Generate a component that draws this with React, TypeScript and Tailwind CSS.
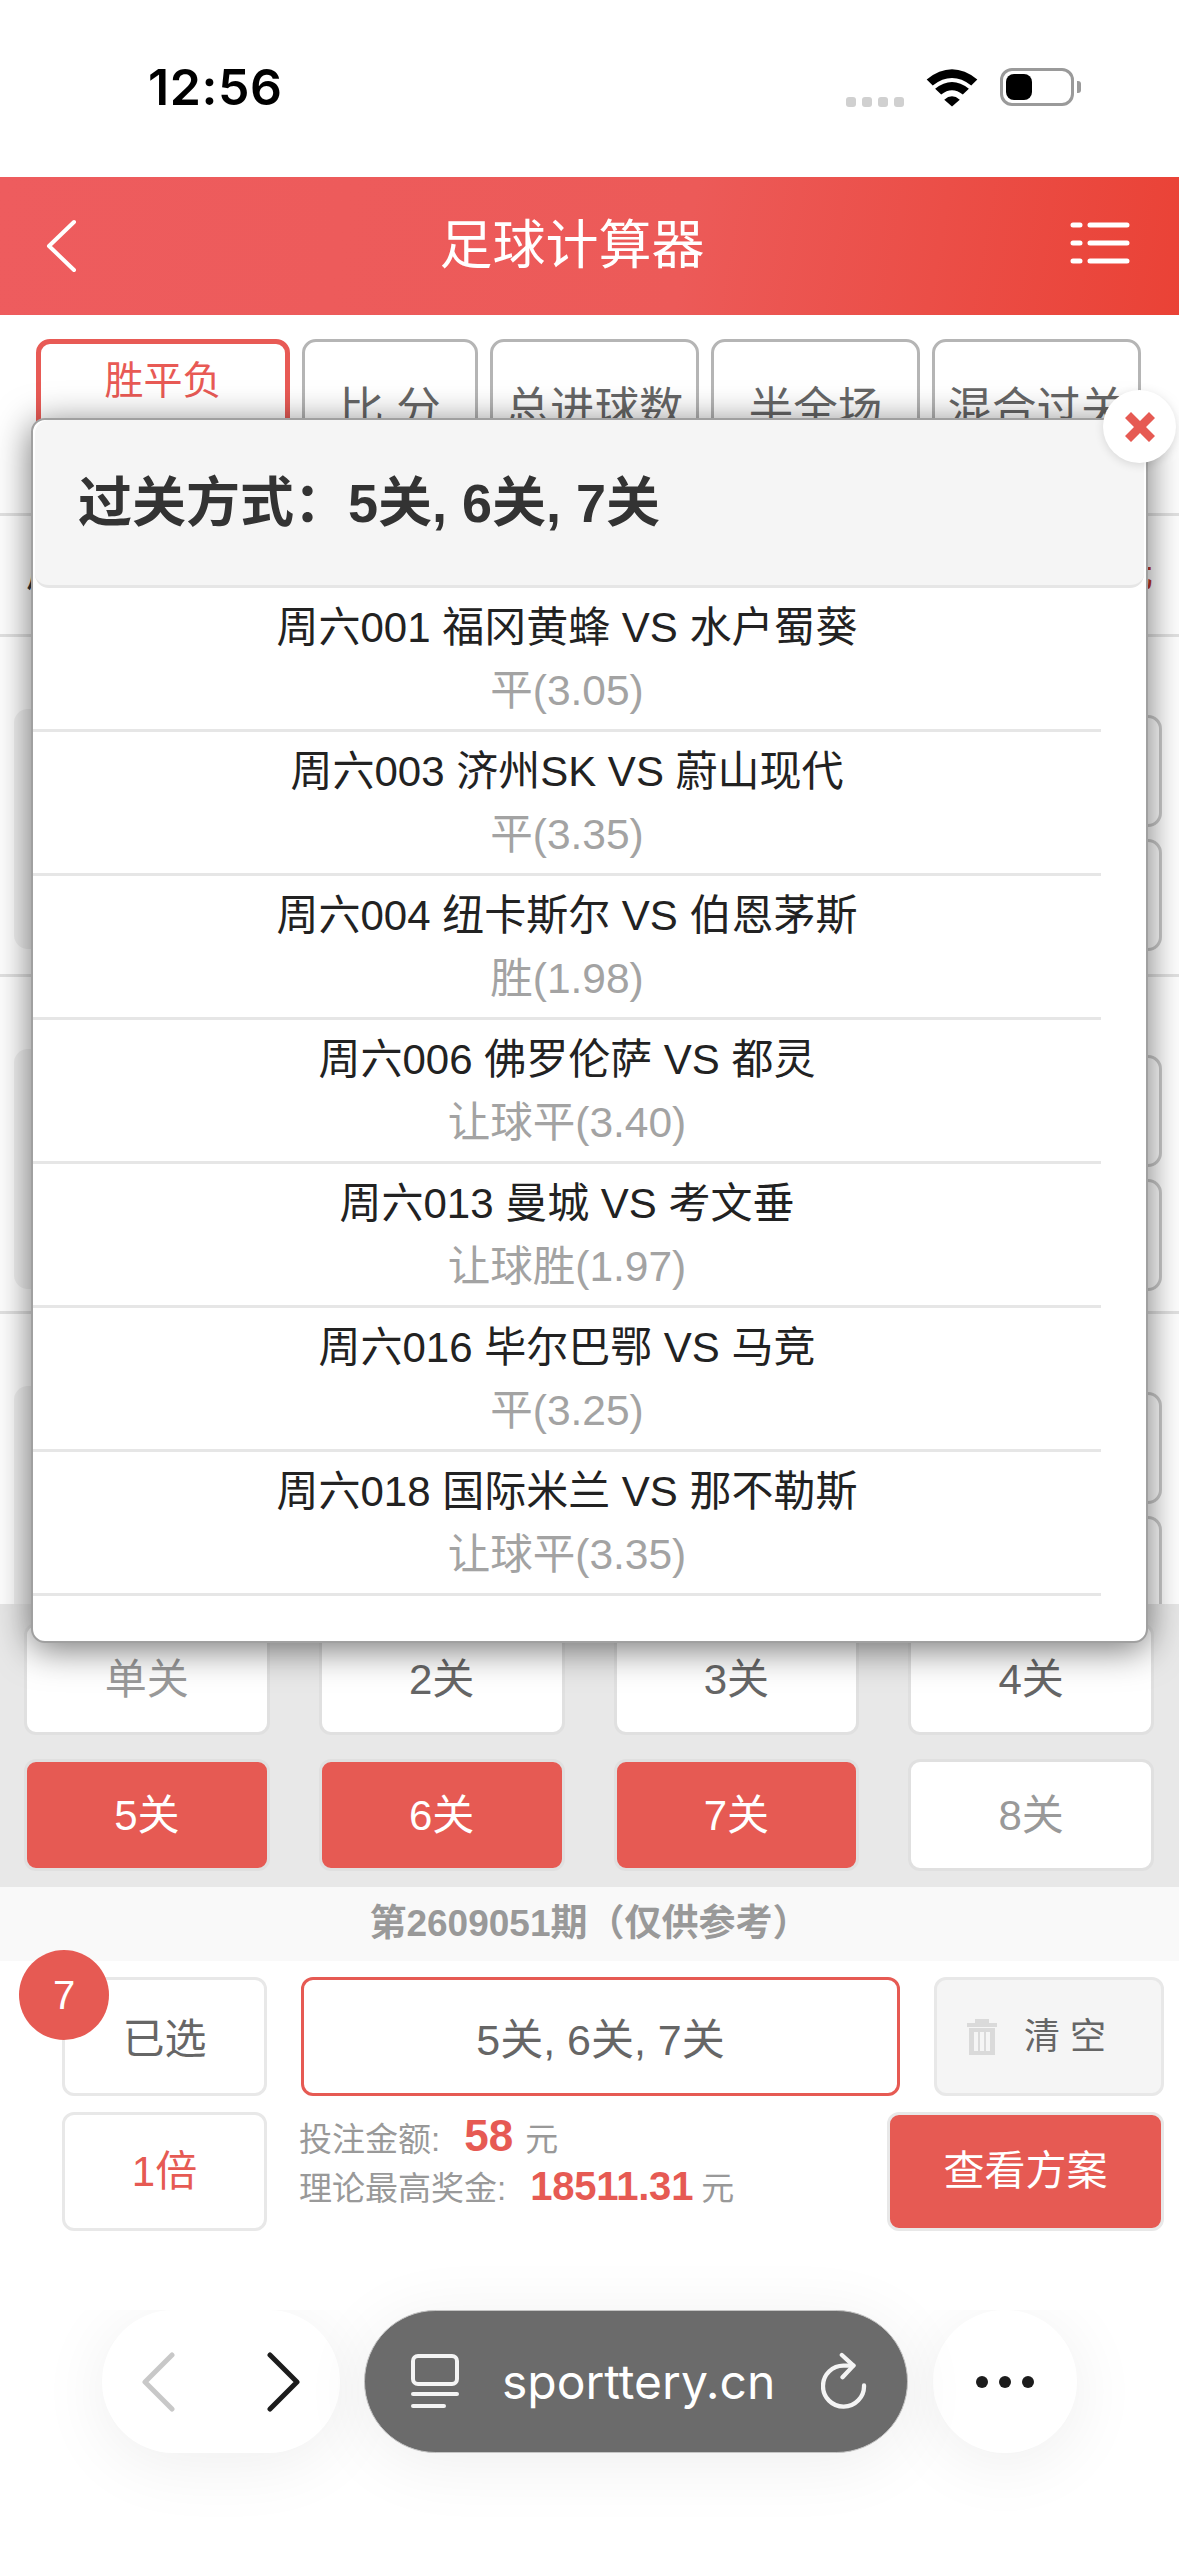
const MATCHES = [
  { title: '周六001 福冈黄蜂 VS 水户蜀葵', pick: '平(3.05)' },
  { title: '周六003 济州SK VS 蔚山现代', pick: '平(3.35)' },
  { title: '周六004 纽卡斯尔 VS 伯恩茅斯', pick: '胜(1.98)' },
  { title: '周六006 佛罗伦萨 VS 都灵', pick: '让球平(3.40)' },
  { title: '周六013 曼城 VS 考文垂', pick: '让球胜(1.97)' },
  { title: '周六016 毕尔巴鄂 VS 马竞', pick: '平(3.25)' },
  { title: '周六018 国际米兰 VS 那不勒斯', pick: '让球平(3.35)' },
];

const TABS = [
  { label: '比 分', width: 'w-[176px]' },
  { label: '总进球数', width: 'w-[209px]' },
  { label: '半全场', width: 'w-[209px]' },
  { label: '混合过关', width: 'w-[209px]' },
];

const PASSES = [
  { label: '单关', active: false, text: 'text-[#999]' },
  { label: '2关', active: false, text: 'text-[#666]' },
  { label: '3关', active: false, text: 'text-[#666]' },
  { label: '4关', active: false, text: 'text-[#666]' },
  { label: '5关', active: true, text: 'text-white' },
  { label: '6关', active: true, text: 'text-white' },
  { label: '7关', active: true, text: 'text-white' },
  { label: '8关', active: false, text: 'text-[#999]' },
];

const StatusBar = () => (
  <div className="relative h-[177px] bg-white">
    <span className="absolute left-[148px] top-[56px] font-['Inter',sans-serif] text-[50px] leading-[62px] font-semibold tracking-[0.6px] text-black">
      12:56
    </span>
    <div className="absolute left-[846px] top-[97px] flex gap-[6px]">
      {[0, 1, 2, 3].map(i => (
        <div key={i} className="w-[10px] h-[10px] rounded-[3px] bg-[#d0d0d0]" />
      ))}
    </div>
    <svg className="absolute left-[926px] top-[68px]" width="52" height="39" viewBox="378 85 154 114">
      <path d="M380 118 Q455 58 530 118 L512 136 Q455 92 398 136 Z" fill="#000" />
      <path d="M405 146 Q455 106 505 146 L487 163 Q455 138 423 163 Z" fill="#000" />
      <path d="M432 178 Q455 158 478 178 L455 198 Z" fill="#000" />
    </svg>
    <div className="absolute left-[1000px] top-[68px] w-[74px] h-[38px] rounded-[12px] border-[3px] border-[#9a9a9a] bg-white p-[3px]">
      <div className="w-[26px] h-full rounded-[8px] bg-black" />
    </div>
    <div className="absolute left-[1077px] top-[81px] w-[4px] h-[12px] rounded-r-[3px] bg-[#9a9a9a]" />
  </div>
);

const Header = () => (
  <div className="relative h-[138px] flex items-center justify-center pr-[35px] bg-[linear-gradient(100deg,#ee5c5e_0%,#ec5a58_58%,#ea4236_100%)]">
    <svg className="absolute left-[45px] top-[42px]" width="32" height="54" viewBox="0 0 32 54" fill="none">
      <path d="M29 3 L4 27 L29 51" stroke="#fff" strokeWidth="4" strokeLinecap="round" strokeLinejoin="round" />
    </svg>
    <span className="text-[53px] leading-[64px] text-white">足球计算器</span>
    <svg className="absolute left-[1070px] top-[44px]" width="60" height="44" viewBox="0 0 60 44" fill="none" stroke="#fff" strokeWidth="5" strokeLinecap="round">
      <path d="M3 4 H10 M20 4 H57" />
      <path d="M3 22 H10 M20 22 H57" />
      <path d="M3 40 H10 M20 40 H57" />
    </svg>
  </div>
);

const Tabs = () => (
  <div className="h-[198px] pt-[24px] pl-[36px] flex gap-[12px] bg-white">
    <div className="w-[254px] h-[140px] rounded-[14px] border-[5px] border-[#e85a55] flex justify-center pt-[13px]">
      <span className="text-[39px] leading-[48px] text-[#e85a55]">胜平负</span>
    </div>
    {TABS.map(tab => (
      <div key={tab.label} className={`${tab.width} h-[140px] rounded-[14px] border-[3px] border-[#b5b5b5] flex items-center justify-center`}>
        <span className="text-[44.5px] leading-[52px] text-[#666] whitespace-nowrap">{tab.label}</span>
      </div>
    ))}
  </div>
);

const MatchSection = ({ height }: { height: string }) => (
  <div className={`${height} border-t-[3px] border-[#e2e2e2] pl-[14px] pr-[17px] flex justify-between items-start pt-[72px] shrink-0`}>
    <div className="w-[300px] h-[240px] rounded-[14px] bg-[#f2f2f2]" />
    <div className="w-[300px] flex flex-col gap-[12px] mt-[6px]">
      <div className="h-[112px] rounded-[14px] border-[3px] border-[#ccc]" />
      <div className="h-[112px] rounded-[14px] border-[3px] border-[#ccc]" />
    </div>
  </div>
);

const MatchList = () => (
  <div className="h-[1091px] overflow-hidden">
    <div className="h-[121px] border-t-[3px] border-[#e2e2e2] flex items-center justify-between pl-[26px] pr-[26px] pb-[6px] text-[40px] leading-[50px]">
      <span className="text-[#333]">周</span>
      <span className="text-[#c0392b]">元</span>
    </div>
    <MatchSection height="h-[340px]" />
    <MatchSection height="h-[337px]" />
    <MatchSection height="h-[340px]" />
  </div>
);

const PassPanel = () => (
  <div className="h-[283px] bg-[#e8e8e8] pt-[19px] pl-[24px] pr-[25px] grid grid-cols-4 gap-x-[49px] gap-y-[24px] content-start">
    {PASSES.map(item => (
      <div
        key={item.label}
        className={`h-[112px] rounded-[12px] border-[3px] border-[#e0e0e0] flex items-center justify-center pt-[2px] text-[42px] leading-[50px] ${item.active ? 'bg-[#e65a53]' : 'bg-white'} ${item.text}`}
      >
        {item.label}
      </div>
    ))}
  </div>
);

const Footer = () => (
  <div className="relative h-[349px] bg-white pt-[16px]">
    <div className="flex pl-[62px] h-[119px]">
      <div className="w-[205px] rounded-[12px] border-[3px] border-[#e8e8e8] flex items-center justify-center pt-[5px] text-[42px] text-[#666]">
        已选
      </div>
      <div className="ml-[34px] w-[599px] rounded-[12px] border-[3px] border-[#e65a53] flex items-center justify-center pt-[8px] text-[43px] text-[#666]">
        5关, 6关, 7关
      </div>
      <div className="ml-[34px] w-[230px] rounded-[12px] border-[3px] border-[#e8e8e8] bg-[#f5f5f5] flex items-center pl-[30px]">
        <svg width="30" height="36" viewBox="0 0 30 36" fill="#dadada">
          <rect x="8" y="0" width="14" height="4" />
          <rect x="0" y="4" width="30" height="4" />
          <path d="M2 9 H28 V36 H2 Z M7 13 V32 H11 V13 Z M13 13 V32 H17 V13 Z M19 13 V32 H23 V13 Z" fillRule="evenodd" />
        </svg>
        <span className="ml-[17px] text-[36px] leading-[44px] text-[#666] whitespace-pre"> 清 空</span>
      </div>
    </div>
    <div className="flex pl-[62px] h-[119px] mt-[16px]">
      <div className="w-[205px] rounded-[12px] border-[3px] border-[#e8e8e8] flex items-center justify-center text-[42px] text-[#e65a53]">
        1倍
      </div>
      <div className="ml-[32px] w-[588px] -mt-[9px] text-[#999] text-[33px]">
        <div className="flex items-baseline h-[53px]">
          <span>投注金额:</span>
          <span className="ml-[24px] mr-[12px] text-[44px] font-bold text-[#e65a53]">58</span>
          <span>元</span>
        </div>
        <div className="flex items-baseline h-[52px]">
          <span>理论最高奖金:</span>
          <span className="ml-[24px] mr-[8px] text-[40px] font-bold tracking-[-0.2px] text-[#e65a53]">18511.31</span>
          <span>元</span>
        </div>
      </div>
      <div className="w-[277px] rounded-[12px] border-[3px] border-[#e8e8e8] bg-[#e65a53] flex items-center justify-center text-[41px] text-white">
        查看方案
      </div>
    </div>
    <div className="absolute left-[19px] top-[-11px] w-[90px] h-[90px] rounded-full bg-[#e65a53] flex items-center justify-center text-[40px] text-white">
      7
    </div>
  </div>
);

const BrowserBar = () => (
  <div className="h-[246px] bg-white flex items-start pl-[102px]">
    <div className="w-[238px] h-[143px] rounded-full bg-white shadow-[0_10px_70px_rgba(0,0,0,0.07)] flex items-center justify-between pl-[40px] pr-[40px]">
      <svg width="34" height="60" viewBox="0 0 34 60" fill="none">
        <path d="M30 3 L3 30 L30 57" stroke="#c8c8c8" strokeWidth="5" strokeLinecap="round" strokeLinejoin="round" />
      </svg>
      <svg width="34" height="60" viewBox="0 0 34 60" fill="none">
        <path d="M4 3 L31 30 L4 57" stroke="#1c1c1c" strokeWidth="5" strokeLinecap="round" strokeLinejoin="round" />
      </svg>
    </div>
    <div className="relative ml-[24px] w-[544px] h-[143px] rounded-full bg-[#6b6b6b] border border-[#c4c4c4] shadow-[0_10px_70px_rgba(0,0,0,0.07)] flex items-center pl-[46px]">
      <svg width="48" height="56" viewBox="0 0 48 56" fill="none" stroke="#f4f4f4" strokeWidth="4" strokeLinecap="round">
        <rect x="2" y="2" width="44" height="28" rx="5" />
        <path d="M2 40 H46" />
        <path d="M2 52 H33" />
      </svg>
      <span className="ml-[43px] font-['Inter',sans-serif] text-[48px] leading-[60px] text-white">sporttery.cn</span>
      <svg className="absolute right-[38px] top-[41px]" width="48" height="57" viewBox="120 125 145 170" fill="none" stroke="#f4f4f4" strokeWidth="13" strokeLinecap="round" strokeLinejoin="round">
        <path d="M250 225 A62 62 0 1 1 190 165 L218 165" />
        <path d="M183 133 L218 165 L185 200" />
      </svg>
    </div>
    <div className="ml-[25px] w-[144px] h-[143px] rounded-full bg-white shadow-[0_10px_70px_rgba(0,0,0,0.07)] flex items-center justify-center gap-[11px]">
      <div className="w-[12px] h-[12px] rounded-full bg-[#1c1c1c]" />
      <div className="w-[12px] h-[12px] rounded-full bg-[#1c1c1c]" />
      <div className="w-[12px] h-[12px] rounded-full bg-[#1c1c1c]" />
    </div>
  </div>
);

const PassModal = () => (
  <div className="absolute left-[31px] top-[418px] w-[1117px] h-[1225px] rounded-[14px] border-[2px] border-[#a0a0a0] bg-white shadow-[0_6px_36px_rgba(0,0,0,0.55)]">
    <div className="h-[168px] mx-[2px] rounded-[14px] bg-[#f5f5f5] border-b-[3px] border-[#e6e6e6] flex items-center pl-[43px]">
      <span className="text-[54px] leading-[64px] font-semibold text-[#333]">过关方式：5关, 6关, 7关</span>
    </div>
    <div className="w-[1068px]">
      {MATCHES.map(match => (
        <div key={match.title} className="h-[144px] border-b-[3px] border-[#e6e6e6] pt-[9px] text-center">
          <div className="text-[42px] leading-[62px] text-[#222]">{match.title}</div>
          <div className="text-[42.5px] leading-[64px] text-[#a3a3a3]">{match.pick}</div>
        </div>
      ))}
    </div>
    <div className="absolute right-[-30px] top-[-30px] w-[73px] h-[73px] rounded-full bg-white shadow-[0_2px_10px_rgba(0,0,0,0.12)] flex items-center justify-center">
      <svg width="30" height="30" viewBox="0 0 30 30">
        <path d="M6 0 L15 9 L24 0 L30 6 L21 15 L30 24 L24 30 L15 21 L6 30 L0 24 L9 15 L0 6 Z" fill="#e65a53" />
      </svg>
    </div>
  </div>
);

export default function App() {
  return (
    <div className="relative w-[1179px] h-[2556px] overflow-hidden bg-white font-['Liberation_Sans','Noto_Sans_CJK_SC',sans-serif]">
      <StatusBar />
      <Header />
      <Tabs />
      <MatchList />
      <PassPanel />
      <div className="h-[74px] bg-[#f9f9f9] flex items-center justify-center text-[37px] leading-[44px] font-bold text-[#999]">
        第2609051期（仅供参考）
      </div>
      <Footer />
      <BrowserBar />
      <PassModal />
    </div>
  );
}
